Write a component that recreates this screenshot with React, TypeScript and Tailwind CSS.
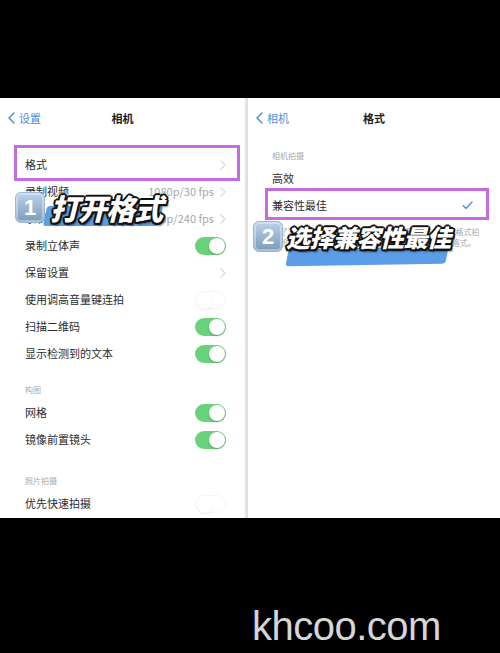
import React from 'react'

const font = { fontFamily: '"Noto Sans CJK SC", "Liberation Sans", sans-serif' }

function Toggle({ on }: { on: boolean }) {
  return (
    <div
      className={`w-[31px] h-[18px] rounded-full p-[1px] flex ${
        on ? 'bg-[#68d37a] justify-end' : 'bg-white border border-[#f6f6f8] justify-start'
      }`}
    >
      <div
        className={`w-[16px] h-[16px] rounded-full bg-white ${
          on ? 'shadow-[0_1px_2px_rgba(0,0,0,0.25)]' : 'shadow-[0_1px_2px_rgba(0,0,0,0.08)]'
        }`}
      />
    </div>
  )
}

function Chevron() {
  return (
    <svg width="6" height="10" viewBox="0 0 6 10" className="ml-[6px]">
      <path d="M1 1l4 4-4 4" fill="none" stroke="#d8d8dc" strokeWidth="1.2" strokeLinecap="round" />
    </svg>
  )
}

function Row({ label, value, toggle, chevron }: { label: string; value?: string; toggle?: boolean; chevron?: boolean }) {
  return (
    <div className="h-[27px] flex items-center justify-between pl-[25px] pr-[19px]">
      <span className="text-[11px] text-[#2b2b2e]">{label}</span>
      <div className="flex items-center">
        {value && <span className="text-[11px] text-[#a6a6ab]">{value}</span>}
        {chevron && <Chevron />}
        {toggle !== undefined && <Toggle on={toggle} />}
      </div>
    </div>
  )
}

function Header({ back, title }: { back: string; title: string }) {
  return (
    <div className="h-[40px] relative flex items-center justify-center">
      <div className="absolute left-[8px] top-0 h-full flex items-center gap-[4px] text-[#4a8fdc]">
        <svg width="7" height="12" viewBox="0 0 7 12">
          <path d="M6 1L1 6l5 5" fill="none" stroke="#4a8fdc" strokeWidth="1.5" strokeLinecap="round" strokeLinejoin="round" />
        </svg>
        <span className="text-[11px]">{back}</span>
      </div>
      <span className="text-[11px] font-bold text-[#1c1c1e]">{title}</span>
    </div>
  )
}

function Section({ label, h, pb }: { label: string; h: string; pb: string }) {
  return (
    <div className={`${h} ${pb} flex items-end pl-[25px]`}>
      <span className="text-[8px] text-[#a8a8ad] leading-[10px]">{label}</span>
    </div>
  )
}

const outline =
  '[text-shadow:2px_0_0_#111,-2px_0_0_#111,0_2px_0_#111,0_-2px_0_#111,1.5px_1.5px_0_#111,-1.5px_1.5px_0_#111,1.5px_-1.5px_0_#111,-1.5px_-1.5px_0_#111,2px_3px_2px_rgba(0,0,0,0.5)]'

function Badge({ n }: { n: string }) {
  return (
    <div className="w-[30px] h-[31px] rounded-[6px] bg-gradient-to-b from-[#b9d3ea] to-[#7d9bbb] border border-[#9fb6cc] flex items-center justify-center shadow-[inset_0_0_0_2px_rgba(255,255,255,0.35)]">
      <span className="text-white font-bold text-[22px] leading-none" style={{ fontFamily: '"Liberation Sans", sans-serif' }}>
        {n}
      </span>
    </div>
  )
}

export default function App() {
  return (
    <div className="w-[500px] h-[653px] bg-black flex flex-col overflow-hidden" style={font}>
      <div className="h-[98px]" />
      <div className="h-[420px] flex bg-white relative">
        {/* Left panel: camera settings */}
        <div className="w-[245px] flex flex-col overflow-hidden">
          <Header back="设置" title="相机" />
          <div className="h-[13px]" />
          <div className="relative">
            <div className="absolute left-[14px] right-[5px] top-[-6px] bottom-[-3px] border-[3px] border-[#c46ce0]" />
            <Row label="格式" chevron />
          </div>
          <Row label="录制视频" value="1080p/30 fps" chevron />
          <Row label="录制慢动作" value="720p/240 fps" chevron />
          <Row label="录制立体声" toggle />
          <Row label="保留设置" chevron />
          <Row label="使用调高音量键连拍" toggle={false} />
          <Row label="扫描二维码" toggle />
          <Row label="显示检测到的文本" toggle />
          <Section label="构图" h="h-[32px]" pb="pb-[4px]" />
          <Row label="网格" toggle />
          <Row label="镜像前置镜头" toggle />
          <Section label="照片拍摄" h="h-[37px]" pb="pb-[4px]" />
          <Row label="优先快速拍摄" toggle={false} />
        </div>

        <div className="w-[3px] bg-[#e2e2e6]" />

        {/* Right panel: format */}
        <div className="flex-1 flex flex-col overflow-hidden">
          <Header back="相机" title="格式" />
          <div className="h-[27px] flex items-end pb-[4px] pl-[24px]">
            <span className="text-[8px] text-[#a8a8ad] leading-[10px]">相机拍摄</span>
          </div>
          <div className="h-[27px] flex items-center pl-[24px]">
            <span className="text-[11px] text-[#2b2b2e]">高效</span>
          </div>
          <div className="relative">
            <div className="absolute left-[17px] right-[11px] top-[-4px] bottom-[-1px] border-[3px] border-[#c46ce0]" />
            <div className="h-[27px] flex items-center justify-between pl-[24px] pr-[27px]">
              <span className="text-[11px] text-[#2b2b2e]">兼容性最佳</span>
              <svg width="11" height="9" viewBox="0 0 11 9">
                <path d="M1 4.5l3 3L10 1" fill="none" stroke="#4a8fdc" strokeWidth="1.3" strokeLinecap="round" strokeLinejoin="round" />
              </svg>
            </div>
          </div>
          <p className="mt-[7px] pl-[24px] pr-[20px] text-[8px] leading-[11px] text-[#a8a8ad]">
            为了减小文件大小，“高效”将以高效率 HEIF/HEVC 格式拍摄照片和视频。“兼容性最佳”将使用 JPEG/H.264 格式。
          </p>
        </div>

        {/* Overlay 1 */}
        <div className="absolute left-[45px] top-[108px] w-[116px] h-[20px] bg-[#5c9de8] -skew-x-12 rounded-[3px]" />
        <div className="absolute left-[15px] top-[94px] flex items-center gap-[5px]">
          <Badge n="1" />
          <span className={`text-white font-black italic text-[29px] leading-none tracking-[-1px] ${outline}`}>打开格式</span>
        </div>

        {/* Overlay 2 */}
        <div className="absolute left-[287px] top-[150px] w-[160px] h-[17px] bg-[#5c9de8] -skew-x-12 -rotate-1 rounded-[3px]" />
        <div className="absolute left-[253px] top-[123px] flex items-center gap-[3px]">
          <Badge n="2" />
          <span className={`text-white font-black italic text-[24px] leading-none tracking-[-0.5px] ${outline}`}>选择兼容性最佳</span>
        </div>
      </div>
      <div className="flex-1 pl-[252px] pt-[88px]">
        <span
          className="text-[40px] leading-none tracking-[-0.5px] text-[#d6d6d6]"
          style={{ fontFamily: '"Liberation Sans", sans-serif' }}
        >
          khcoo.com
        </span>
      </div>
    </div>
  )
}
